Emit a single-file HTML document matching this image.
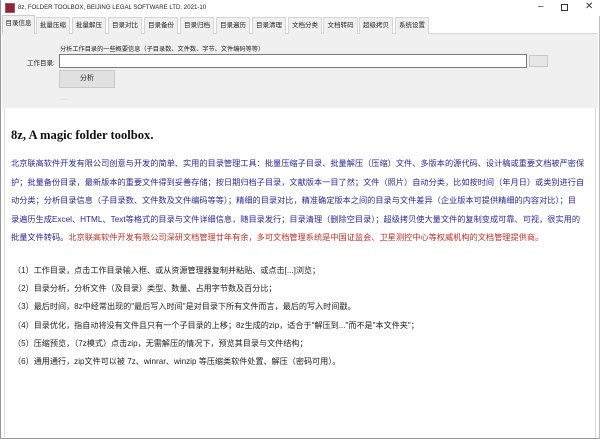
<!DOCTYPE html>
<html><head><meta charset="utf-8"><style>
*{margin:0;padding:0;box-sizing:border-box}
body{width:600px;height:439px;overflow:hidden;background:#fff;font-family:"Liberation Sans","Noto Sans CJK SC",sans-serif;position:relative;border-left:1px solid #999;border-bottom:1px solid #999;border-right:1px solid #bbb}
.abs{position:absolute;white-space:nowrap}
.title{left:0;top:0;width:600px;height:16px;background:#fff}
.tabs{left:0;top:16px;width:600px;height:18px}
.tab{position:absolute;top:1px;height:17px;font-size:6.5px;line-height:16px;text-align:center;border:1px solid #d6d6d6;border-bottom:none;background:#f0f0f0;color:#222;overflow:hidden}
.tab.sel{top:-1px;height:19px;border-color:#ccc}
.panel{left:1px;top:33px;width:596px;height:75px;background:#f0f0f0;border-top:1px solid #d9d9d9}
.ct{left:3px;top:108px;width:592px;height:329px;background:#fff;border-left:1px solid #ddd;border-right:1px solid #ddd}
.p{font-size:8.2px;color:#2a2a96;left:10px}
.l{font-size:8.1px;color:#222;left:12px}
</style></head><body>
<div class="abs title">
 <div class="abs" style="left:4px;top:3px;width:10px;height:10px;background:#8a2838;border:1px solid #b05060"></div>
 <div class="abs" style="left:17px;top:4px;font-size:6.1px;color:#222">8z, FOLDER TOOLBOX, BEIJING LEGAL SOFTWARE LTD. 2021-10</div>
 <div class="abs" style="left:537px;top:1px;font-size:10px;color:#333">–</div>
 <div class="abs" style="left:560px;top:4px;width:7px;height:7px;border:1px solid #333"></div>
 <div class="abs" style="left:584px;top:1px;font-size:10px;color:#333">✕</div>
</div>
<div class="abs panel"></div>
<div class="abs tabs">
 <div class="tab sel" style="left:1px;width:33px">目录信息</div>
 <div class="tab" style="left:35px;width:34px">批量压缩</div>
 <div class="tab" style="left:71px;width:34px">批量解压</div>
 <div class="tab" style="left:107px;width:34px">目录对比</div>
 <div class="tab" style="left:143px;width:34px">目录备份</div>
 <div class="tab" style="left:179px;width:34px">目录归档</div>
 <div class="tab" style="left:215px;width:34px">目录遍历</div>
 <div class="tab" style="left:251px;width:34px">目录清理</div>
 <div class="tab" style="left:287px;width:34px">文档分类</div>
 <div class="tab" style="left:322px;width:35px">文档转码</div>
 <div class="tab" style="left:358px;width:34px">超级拷贝</div>
 <div class="tab" style="left:394px;width:34px">系统设置</div>
</div>
<div class="abs" style="left:59px;top:44px;font-size:6.2px;color:#222">分析工作目录的一些概要信息（子目录数、文件数、字节、文件编码等等）</div>
<div class="abs" style="left:26px;top:57px;font-size:6.5px;color:#222">工作目录:</div>
<div class="abs" style="left:58px;top:54px;width:468px;height:14px;background:#fff;border:1px solid #7a7a7a"></div>
<div class="abs" style="left:528px;top:55px;width:19px;height:12px;background:#e6e6e6;border:1px solid #c8c8c8"></div>
<div class="abs" style="left:58px;top:70px;width:56px;height:18px;background:#e1e1e1;border:1px solid #c8c8c8;font-size:7px;text-align:center;line-height:16px;color:#222">分析</div>
<div class="abs" style="left:60px;top:95px;font-size:7px;color:#bbb">....</div>
<div class="abs ct"></div>
<div class="abs" style="left:10px;top:128px;font-family:'Liberation Serif',serif;font-weight:bold;font-size:12.6px;color:#111">8z, A magic folder toolbox.</div>
<div class="abs p" style="top:157px">北京联高软件开发有限公司创意与开发的简单、实用的目录管理工具：批量压缩子目录、批量解压（压缩）文件、多版本的源代码、设计稿或重要文档被严密保</div>
<div class="abs p" style="top:176px">护；批量备份目录，最新版本的重要文件得到妥善存储；按日期归档子目录，文献版本一目了然；文件（照片）自动分类，比如按时间（年月日）或类别进行自</div>
<div class="abs p" style="top:194px">动分类；分析目录信息（子目录数、文件数及文件编码等等）；精细的目录对比，精准确定版本之间的目录与文件差异（企业版本可提供精细的内容对比）；目</div>
<div class="abs p" style="top:213px">录遍历生成Excel、HTML、Text等格式的目录与文件详细信息，随目录发行；目录清理（删除空目录）；超级拷贝使大量文件的复制变成可靠、可视，很实用的</div>
<div class="abs p" style="top:231px">批量文件转码。<span style="color:#c03028">北京联高软件开发有限公司深研文档管理廿年有余，多可文档管理系统是中国证监会、卫星测控中心等权威机构的文档管理提供商。</span></div>
<div class="abs l" style="top:265px">（1）工作目录，点击工作目录输入框、或从资源管理器复制并粘贴、或点击[...]浏览；</div>
<div class="abs l" style="top:283px">（2）目录分析，分析文件（及目录）类型、数量、占用字节数及百分比；</div>
<div class="abs l" style="top:301px">（3）最后时间，8z中经常出现的"最后写入时间"是对目录下所有文件而言，最后的写入时间戳。</div>
<div class="abs l" style="top:320px">（4）目录优化，指自动将没有文件且只有一个子目录的上移；8z生成的zip，适合于"解压到..."而不是"本文件夹"；</div>
<div class="abs l" style="top:338px">（5）压缩预览，（7z模式）点击zip，无需解压的情况下，预览其目录与文件结构；</div>
<div class="abs l" style="top:356px">（6）通用通行，zip文件可以被 7z、winrar、winzip 等压缩类软件处置、解压（密码可用）。</div>
</body></html>
